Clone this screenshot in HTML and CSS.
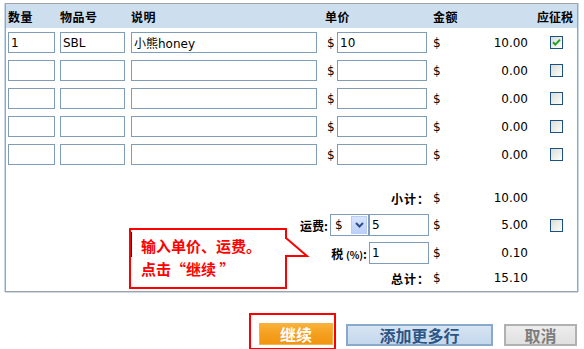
FILE: index.html
```html
<!DOCTYPE html>
<html lang="zh-CN">
<head>
<meta charset="utf-8">
<link rel="stylesheet" href="styles.css">
</head>
<body>
<div class="page">
  <div class="cart">
    <div class="grid head">
      <span class="c1">数量</span>
      <span class="c2">物品号</span>
      <span class="c3">说明</span>
      <span class="h-price">单价</span>
      <span class="c6">金额</span>
      <span class="h-tax">应征税</span>
    </div>

    <div class="grid row">
      <input class="inp w1" type="text" value="1">
      <input class="inp w2" type="text" value="SBL">
      <input class="inp w3" type="text" value="小熊honey">
      <span class="dollar">$</span>
      <input class="inp w4" type="text" value="10">
      <span class="amt"><span>$</span><span>10.00</span></span>
      <span class="cb checked"><svg viewBox="0 0 11 11" width="11" height="11"><path d="M2 5.2 L4.3 7.6 L9 2.6" fill="none" stroke="#21a121" stroke-width="2"/></svg></span>
    </div>
    <div class="grid row">
      <input class="inp w1" type="text" value="">
      <input class="inp w2" type="text" value="">
      <input class="inp w3" type="text" value="">
      <span class="dollar">$</span>
      <input class="inp w4" type="text" value="">
      <span class="amt"><span>$</span><span>0.00</span></span>
      <span class="cb"></span>
    </div>
    <div class="grid row">
      <input class="inp w1" type="text" value="">
      <input class="inp w2" type="text" value="">
      <input class="inp w3" type="text" value="">
      <span class="dollar">$</span>
      <input class="inp w4" type="text" value="">
      <span class="amt"><span>$</span><span>0.00</span></span>
      <span class="cb"></span>
    </div>
    <div class="grid row">
      <input class="inp w1" type="text" value="">
      <input class="inp w2" type="text" value="">
      <input class="inp w3" type="text" value="">
      <span class="dollar">$</span>
      <input class="inp w4" type="text" value="">
      <span class="amt"><span>$</span><span>0.00</span></span>
      <span class="cb"></span>
    </div>
    <div class="grid row">
      <input class="inp w1" type="text" value="">
      <input class="inp w2" type="text" value="">
      <input class="inp w3" type="text" value="">
      <span class="dollar">$</span>
      <input class="inp w4" type="text" value="">
      <span class="amt"><span>$</span><span>0.00</span></span>
      <span class="cb"></span>
    </div>

    <div class="grid sum sum1">
      <span class="label">小计：</span>
      <span class="amt"><span>$</span><span>10.00</span></span>
    </div>
    <div class="grid sum sum2">
      <span class="label">
        <span class="lbl">运费:</span>
        <span class="sel"><span class="sel-val">$</span><span class="sel-btn"><svg viewBox="0 0 9 6" width="9" height="6"><path d="M1 1 L4.5 4.5 L8 1" fill="none" stroke="#2d4f8a" stroke-width="2"/></svg></span></span>
        <input class="inp w5" type="text" value="5">
      </span>
      <span class="amt"><span>$</span><span>5.00</span></span>
      <span class="cb"></span>
    </div>
    <div class="grid sum sum3">
      <span class="label">
        <span class="lbl">税 <small>(%)</small>:</span>
        <input class="inp w5" type="text" value="1">
      </span>
      <span class="amt"><span>$</span><span>0.10</span></span>
    </div>
    <div class="grid sum sum4">
      <span class="label">总计：</span>
      <span class="amt"><span>$</span><span>15.10</span></span>
    </div>
  </div>

  <div class="callout">
    <span class="caret"></span>
    <p class="callout-text">输入单价、运费。<br>点击“继续 ”</p>
    <svg class="pointer" viewBox="0 0 24 21" width="24" height="21"><rect x="0" y="2" width="3" height="16" fill="#fff"/><polyline points="1,1 22,19 1,19" fill="#fff" stroke="#ff0000" stroke-width="2"/></svg>
  </div>

  <div class="actions">
    <button class="btn btn-go" type="button">继续</button>
    <button class="btn btn-add" type="button">添加更多行</button>
    <button class="btn btn-cancel" type="button">取消</button>
    <span class="highlight"></span>
  </div>
</div>
</body>
</html>
```

FILE: styles.css
```css
html, body {
  margin: 0;
  padding: 0;
  background: #ffffff;
}

body {
  font-family: "DejaVu Sans", "Noto Sans CJK SC", sans-serif;
  font-size: 12px;
  color: #000;
}

.page {
  position: relative;
  width: 584px;
  height: 349px;
  overflow: hidden;
}

.cart {
  margin: 3px 0 0 5px;
  width: 573px;
  box-sizing: border-box;
  border: 1px solid #a3a3a3;
  box-shadow: 0 1px 0 0 #c8d8ea, -1px 0 0 0 #c8d8ea, 1px 0 0 0 #c8d8ea;
  padding-bottom: 1px;
}

.grid {
  display: grid;
  grid-template-columns: 52px 71px 196px 10px 96px 95px 22px 13px 12px;
  padding-left: 2px;
}

.head {
  height: 24px;
  background: #cddeef;
  align-items: center;
  font-family: "Noto Sans CJK SC", sans-serif;
  font-weight: bold;
  font-size: 12px;
  letter-spacing: 0.5px;
}

.c1 { grid-column: 1; }
.c2 { grid-column: 2; }
.c3 { grid-column: 3; }
.h-price { grid-column: 4 / 6; margin-left: -2px; }
.c6 { grid-column: 6; }
.h-tax { grid-column: 7 / 10; justify-self: end; margin-right: 2px; letter-spacing: 0; }

.row {
  height: 28px;
  box-sizing: border-box;
  padding-top: 4px;
  align-items: start;
}

.inp {
  display: block;
  height: 21px;
  box-sizing: border-box;
  margin: 0;
  border: 1px solid #7f9db9;
  padding: 0 2px;
  font-family: "DejaVu Sans", "Noto Sans CJK SC", sans-serif;
  font-size: 12px;
  color: #000;
  background: #fff;
  outline: none;
}

.w1 { width: 47px; }
.w2 { width: 65px; }
.w3 { width: 186px; }
.w4 { width: 90px; }
.w5 { width: 60px; height: 22px; }

.dollar {
  line-height: 21px;
  padding-top: 1px;
}

.amt {
  grid-column: 6;
  display: flex;
  justify-content: space-between;
  line-height: 21px;
  padding-top: 1px;
}

.cb {
  grid-column: 8;
  width: 13px;
  height: 13px;
  box-sizing: border-box;
  margin-top: 4px;
  border: 1px solid #1c5180;
  background: linear-gradient(135deg, #dcdcd6 0%, #f3f3f1 70%, #ffffff 100%);
  display: flex;
  align-items: center;
  justify-content: center;
}

.sum {
  height: 22px;
  align-items: center;
}

.sum .amt, .sum .dollar {
  padding-top: 0;
}

.sum .cb {
  margin-top: 0;
}

.sum1 { margin-top: 19px; }
.sum2 { margin-top: 5px; }
.sum3 { margin-top: 6px; }
.sum4 { margin-top: 3px; height: 23px; }

.label {
  grid-column: 1 / 6;
  justify-self: end;
  margin-right: 4px;
  font-family: "Noto Sans CJK SC", sans-serif;
  font-weight: bold;
  display: flex;
  align-items: center;
}

.sum1 .label, .sum4 .label {
  margin-right: 3px;
  letter-spacing: 1px;
}

.lbl {
  margin-right: 2px;
}

.lbl small {
  font-size: 10px;
}

.sel {
  width: 39px;
  height: 22px;
  box-sizing: border-box;
  border: 1px solid #7f9db9;
  background: #fff;
  display: flex;
  align-items: center;
  justify-content: space-between;
  padding: 1px;
  font-family: "DejaVu Sans", sans-serif;
  font-weight: normal;
}

.sel-val {
  padding-left: 3px;
}

.sel-btn {
  width: 16px;
  height: 18px;
  box-sizing: border-box;
  border: 1px solid #b9cdf6;
  background: linear-gradient(180deg, #d9e4fd 0%, #bccff9 100%);
  display: flex;
  align-items: center;
  justify-content: center;
}

.callout {
  position: absolute;
  left: 129px;
  top: 228px;
  width: 158px;
  height: 61px;
  box-sizing: border-box;
  border: 2px solid #ff0000;
  background: #fff;
}

.caret {
  position: absolute;
  left: 0;
  top: 2px;
  width: 1px;
  height: 25px;
  background: #000;
}

.callout-text {
  margin: 0;
  padding: 4px 0 0 10px;
  font-family: "Noto Sans CJK SC", sans-serif;
  font-weight: bold;
  font-size: 15px;
  line-height: 23px;
  color: #ff0000;
  white-space: nowrap;
}

.pointer {
  position: absolute;
  left: 154px;
  top: 7px;
  overflow: visible;
}

.actions {
  position: relative;
  display: flex;
  align-items: flex-start;
  margin-top: 31px;
  padding-left: 259px;
}

.btn {
  height: 22px;
  box-sizing: border-box;
  margin: 0;
  padding: 0;
  font-family: "Noto Sans CJK SC", sans-serif;
  font-weight: bold;
  font-size: 16px;
  line-height: 18px;
  cursor: pointer;
}

.btn-go {
  width: 74px;
  border: 1px solid #f6b24a;
  background: linear-gradient(180deg, #f9b23a 0%, #f5a020 45%, #f29511 100%);
  color: #fff;
}

.btn-add {
  width: 147px;
  margin-left: 13px;
  margin-top: 1px;
  border: 2px solid #88a9cc;
  background: linear-gradient(180deg, #d6e4f3 0%, #c4d7ec 100%);
  color: #2c5585;
}

.btn-cancel {
  width: 73px;
  margin-left: 11px;
  margin-top: 1px;
  border: 2px solid #b1b1b1;
  background: linear-gradient(180deg, #ededed 0%, #e0e0e0 100%);
  color: #7d7d7d;
}

.highlight {
  position: absolute;
  left: 249px;
  top: -10px;
  width: 87px;
  height: 37px;
  box-sizing: border-box;
  border: 2px solid #ff0000;
}
```
